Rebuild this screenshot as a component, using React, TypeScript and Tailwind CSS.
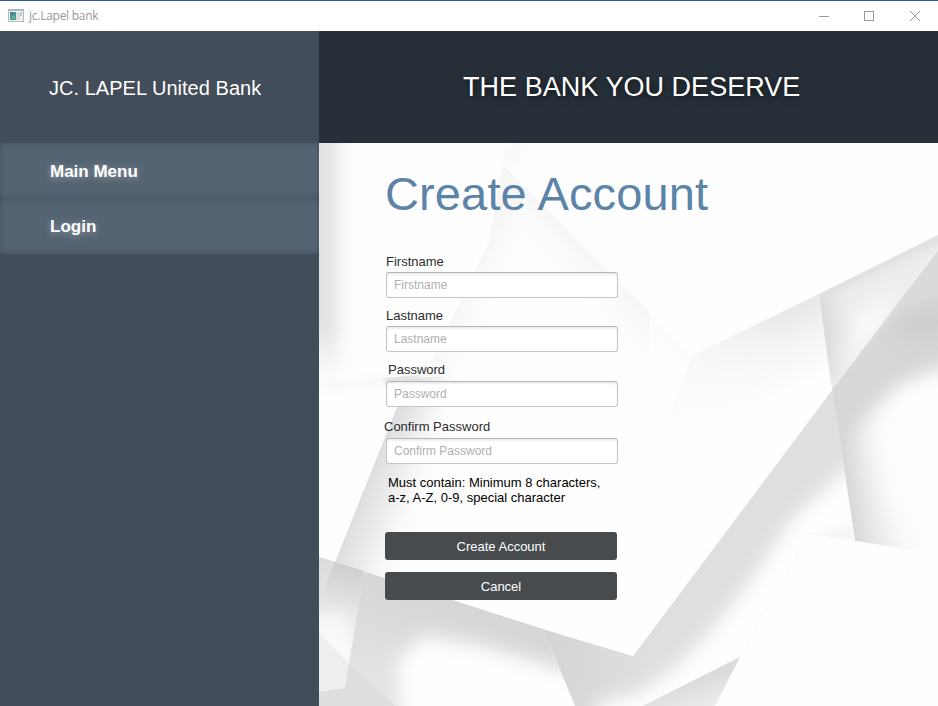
const fields = [
  { label: "Firstname", labelClass: "ml-px", rowClass: "h-[54px]", gap: "mt-[2px]" },
  { label: "Lastname", labelClass: "ml-px", rowClass: "h-[54px]", gap: "mt-[2px]" },
  { label: "Password", labelClass: "ml-[3px]", rowClass: "h-[57px]", gap: "mt-[3px]" },
  { label: "Confirm Password", labelClass: "-ml-px", rowClass: "h-[49px]", gap: "mt-[3px]" },
];

/** Abstract folded-paper backdrop behind the form. */
function Backdrop() {
  return (
    <svg className="absolute inset-0 h-full w-full" viewBox="319 143 619 563" preserveAspectRatio="none">
      <defs>
        <filter id="b4" x="-50%" y="-50%" width="200%" height="200%"><feGaussianBlur stdDeviation="4" /></filter>
        <filter id="b8" x="-50%" y="-50%" width="200%" height="200%"><feGaussianBlur stdDeviation="9" /></filter>
        <filter id="b16" x="-50%" y="-50%" width="200%" height="200%"><feGaussianBlur stdDeviation="16" /></filter>
        <linearGradient id="strip" x1="319" x2="355" y1="0" y2="0" gradientUnits="userSpaceOnUse">
          <stop offset="0" stopColor="#e2e2e2" /><stop offset=".35" stopColor="#e7e7e7" /><stop offset=".65" stopColor="#f6f6f6" /><stop offset="1" stopColor="#fefefe" />
        </linearGradient>
        <linearGradient id="stripEnd" x1="322" x2="310" y1="325" y2="380" gradientUnits="userSpaceOnUse">
          <stop offset="0" stopColor="#fefefe" stopOpacity="0" /><stop offset="1" stopColor="#fefefe" />
        </linearGradient>
        <linearGradient id="ridge" x1="600" y1="262" x2="562" y2="300" gradientUnits="userSpaceOnUse">
          <stop offset="0" stopColor="#f6f6f6" /><stop offset="1" stopColor="#fefefe" stopOpacity="0" />
        </linearGradient>
        <linearGradient id="fold" x1="470" y1="280" x2="508" y2="297" gradientUnits="userSpaceOnUse">
          <stop offset="0" stopColor="#f6f6f6" /><stop offset="1" stopColor="#fefefe" stopOpacity="0" />
        </linearGradient>
        <linearGradient id="under" x1="765" y1="321" x2="795" y2="390" gradientUnits="userSpaceOnUse">
          <stop offset="0" stopColor="#e8e8e8" /><stop offset=".5" stopColor="#f6f6f6" /><stop offset="1" stopColor="#fefefe" />
        </linearGradient>
        <linearGradient id="underFade" x1="700" y1="0" x2="790" y2="0" gradientUnits="userSpaceOnUse">
          <stop offset="0" stopColor="#fefefe" stopOpacity=".7" /><stop offset="1" stopColor="#fefefe" stopOpacity="0" />
        </linearGradient>
        <linearGradient id="slant" x1="352" y1="520" x2="414" y2="545" gradientUnits="userSpaceOnUse">
          <stop offset="0" stopColor="#dedede" /><stop offset=".4" stopColor="#ededed" /><stop offset=".75" stopColor="#fafafa" /><stop offset="1" stopColor="#fefefe" />
        </linearGradient>
        <linearGradient id="corner" x1="345" y1="565" x2="325" y2="645" gradientUnits="userSpaceOnUse">
          <stop offset="0" stopColor="#cfcfcf" /><stop offset=".45" stopColor="#e2e2e2" /><stop offset="1" stopColor="#f9f9f9" />
        </linearGradient>
        <linearGradient id="base" x1="440" y1="596" x2="410" y2="690" gradientUnits="userSpaceOnUse">
          <stop offset="0" stopColor="#d6d6d6" /><stop offset="1" stopColor="#e3e3e3" />
        </linearGradient>
        <linearGradient id="wedge" x1="550" y1="640" x2="650" y2="655" gradientUnits="userSpaceOnUse">
          <stop offset="0" stopColor="#d5d5d5" /><stop offset="1" stopColor="#dfdfdf" />
        </linearGradient>
        <linearGradient id="lowtri" x1="685" y1="684" x2="694" y2="712" gradientUnits="userSpaceOnUse">
          <stop offset="0" stopColor="#dbdbdb" /><stop offset="1" stopColor="#ececec" />
        </linearGradient>
        <linearGradient id="quad" x1="842" y1="465" x2="917" y2="455" gradientUnits="userSpaceOnUse">
          <stop offset="0" stopColor="#d6d6d6" /><stop offset=".3" stopColor="#e8e8e8" /><stop offset=".65" stopColor="#f8f8f8" /><stop offset="1" stopColor="#fefefe" />
        </linearGradient>
        <clipPath id="kiteClip"><path d="M819 294L938 235V250L832 390Z" /></clipPath>
        <clipPath id="bandClip"><path d="M543 629L633 656L832 390L855 541L810 533L740 657L643 706H575Z" /></clipPath>
        <clipPath id="lowerClip"><path d="M319 557L543 629L575 706H319Z" /></clipPath>
        <clipPath id="quadClip"><path d="M938 250L832 390L855 541L938 554Z" /></clipPath>
        <clipPath id="cornerClip"><path d="M319 557L364 572L345 688L319 692Z" /></clipPath>
        <clipPath id="slantClip"><path d="M381 378L475 371V605H440L335 562L397 407Z" /></clipPath>
      </defs>
      <path fill="#fefefe" d="M319 143H938V706H319Z" />
      <path fill="url(#strip)" d="M319 143H355V385H319Z" />
      <path fill="url(#stripEnd)" d="M319 315H365V386H319Z" />
      <path fill="#f9f9f9" d="M505 143H526L514 172L503 164Z" filter="url(#b4)" />
      <path fill="url(#ridge)" d="M503 165L692 356L660 398L500 235Z" />
      <path fill="url(#fold)" d="M503 165L489 242L450 322L425 376H510L560 250Z" />
      <path fill="#f7f7f7" d="M319 383L390 377L397 384L319 391Z" filter="url(#b4)" />

      {/* Folds on the right side */}
      <path fill="url(#under)" d="M692 356L819 294L832 390L817 410L660 440Z" />
      <path fill="url(#underFade)" d="M650 290H790V445H650Z" />
      <g clipPath="url(#kiteClip)">
        <path fill="#ededed" d="M819 294L938 235V250L832 390Z" />
        <path fill="#fcfcfc" filter="url(#b8)" d="M858 315L900 290L878 330L850 368Z" />
        <path fill="#d9d9d9" filter="url(#b8)" d="M800 280L828 290L836 330L832 375L815 400Z" />
        <path fill="#dddddd" filter="url(#b4)" d="M810 292L938 228L948 240L925 250L885 268L830 296Z" opacity=".8" />
      </g>
      <g clipPath="url(#quadClip)">
        <path fill="url(#quad)" d="M938 250L832 390L855 541L938 554Z" />
        <path fill="#d7d7d7" filter="url(#b8)" d="M815 390L905 285L960 280V365L900 386L866 416L838 450Z" />
        <path fill="#cbcbcb" filter="url(#b8)" d="M895 318L950 300V336L900 340Z" opacity=".7" />
        <path fill="#fefefe" filter="url(#b16)" d="M970 372L912 396L872 430L895 515L970 530Z" />
        <path fill="#dadada" d="M938 250L891 312L938 297Z" />
      </g>

      {/* Diagonal band and the wedge it grows out of */}
      <g clipPath="url(#bandClip)">
        <path fill="url(#wedge)" d="M543 629L633 656L832 390H860V706H543Z" />
        <path fill="#fefefe" filter="url(#b8)" d="M880 448L843 472L791 520L748 584L708 634L674 668L642 692L596 704V740H900Z" />
        <path fill="#f2f2f2" opacity=".8" filter="url(#b4)" d="M830 532L850 524L862 545L815 536Z" />
      </g>
      <path fill="url(#lowtri)" d="M740 657L643 706H715Z" />

      {/* Folds on the left side */}
      <g clipPath="url(#slantClip)">
        <path fill="url(#slant)" d="M408 380L397 407L335 562L440 605L475 594V371Z" />
        <path fill="#e2e2e2" d="M381 374L415 370L425 380V400H397Z" filter="url(#b4)" />
        <path fill="#fefefe" filter="url(#b16)" d="M452 350H520V625H408L424 510Z" />
      </g>
      <path fill="url(#corner)" d="M319 557L364 571L345 688L319 692Z" />
      <g clipPath="url(#cornerClip)">
        <path fill="#e4e4e4" opacity=".6" d="M319 557L335 562L319 602Z" />
        <path fill="#fefefe" filter="url(#b8)" opacity=".8" d="M310 622L347 612L340 655Z" />
        <path fill="#eaeaea" opacity=".7" d="M319 632L349 663L345 688L319 692Z" />
      </g>
      <g clipPath="url(#lowerClip)">
        <path fill="url(#base)" d="M364 570L543 628L576 706H319V692L345 688Z" />
        <path fill="#fefefe" filter="url(#b8)" d="M397 660L425 636L480 646L555 668L620 690V730H402Z" />
        <path fill="#dadada" opacity=".6" d="M349 663L395 706H319V692L345 688Z" />
      </g>
    </svg>
  );
}

function TitleBar() {
  return (
    <header className="flex h-[31px] items-center border-t border-[#2b5b96] bg-white pl-2">
      <svg width="16" height="14" viewBox="0 0 16 14" shapeRendering="crispEdges">
        <path fill="#b4b8bb" d="M0 0H16V13H0Z" />
        <path fill="#f4f4f4" d="M1 2H15V12H1Z" />
        <rect x="2" y="3" width="6" height="8" fill="#4d9a92" />
        <path fill="#477ca6" d="M2 3H5V6H2Z" />
        <path fill="#64b68c" d="M4 7H7V10H4Z" />
        <rect x="8" y="3" width="4" height="8" fill="#dedede" />
        <rect x="12" y="3" width="2" height="4" fill="#a8d0c5" />
      </svg>
      <span className="ml-[5px] font-['Open_Sans',sans-serif] text-[12px] leading-4 tracking-[-0.26px] text-[#999]">jc.Lapel bank</span>
      <svg className="ml-auto mr-[17px]" width="103" height="12" viewBox="0 0 103 12" fill="none" stroke="#999">
        <path d="M1 6.5H11M46.500 1.500H55.500V10.500H46.500Z" shapeRendering="crispEdges" />
        <path d="M92 1L102 11M102 1L92 11" />
      </svg>
    </header>
  );
}

const itemClass =
  "flex items-center rounded-[3px] bg-[#556473] pl-[50px] pt-[2px] text-[17px] font-bold text-white shadow-[inset_0_0_6px_0px_rgba(58,69,80,0.65)] [text-shadow:0_1px_7px_rgba(255,255,255,0.4)]";

export default function App() {
  return (
    <div className="flex h-[706px] w-[938px] flex-col overflow-hidden bg-white font-['Liberation_Sans',Arial,sans-serif]">
      <TitleBar />
      <div className="flex flex-1">
        <aside className="w-[319px] bg-[#424d59]">
          <div className="flex h-28 items-center pl-[49px] pt-[2px] text-[20px] tracking-[0.03px] text-white">JC. LAPEL United Bank</div>
          <nav className="flex flex-col">
            <a className={`h-[55px] ${itemClass}`}>Main Menu</a>
            <a className={`h-[56px] ${itemClass}`}>Login</a>
          </nav>
        </aside>
        <div className="flex flex-1 flex-col">
          <div className="flex h-28 items-center bg-[#273039] pl-[144px] pt-px text-[27px] tracking-[0.04px] text-white [text-shadow:1px_2px_7px_rgba(0,0,0,0.7)]">
            THE BANK YOU DESERVE
          </div>
          <main className="relative flex-1">
            <Backdrop />
            <div className="relative flex w-[400px] flex-col pl-[66px] pt-6">
              <h1 className="h-[54px] whitespace-nowrap text-[47px] leading-[54px] tracking-[0.13px] text-[#5c84a8]">Create Account</h1>
              <form className="mt-[33px] flex w-[233px] flex-col">
                {fields.map((f) => (
                  <div key={f.label} className={f.rowClass}>
                    <label className={`block text-[13px] leading-4 text-[#2c2c2c] ${f.labelClass}`}>{f.label}</label>
                    <input
                      placeholder={f.label}
                      className={`ml-px block h-[26px] w-[232px] rounded-[3px] border border-[#c4c4c4] border-t-[#b5b5b5] bg-white px-[7px] text-[12px] shadow-[inset_0_2px_2px_rgba(0,0,0,0.07)] placeholder:text-[#b0b0b0] ${f.gap}`}
                    />
                  </div>
                ))}
                <p className="ml-[3px] mt-[7px] h-[57px] text-[13px] leading-[15px] text-black">
                  Must contain: Minimum 8 characters,
                  <br />
                  a-z, A-Z, 0-9, special character
                </p>
                <button type="button" className="h-7 w-[232px] rounded-[3px] bg-[#474b4e] pt-[2px] text-[13px] text-white">Create Account</button>
                <button type="button" className="mt-3 h-7 w-[232px] rounded-[3px] bg-[#474b4e] pt-[2px] text-[13px] text-white">Cancel</button>
              </form>
            </div>
          </main>
        </div>
      </div>
    </div>
  );
}
